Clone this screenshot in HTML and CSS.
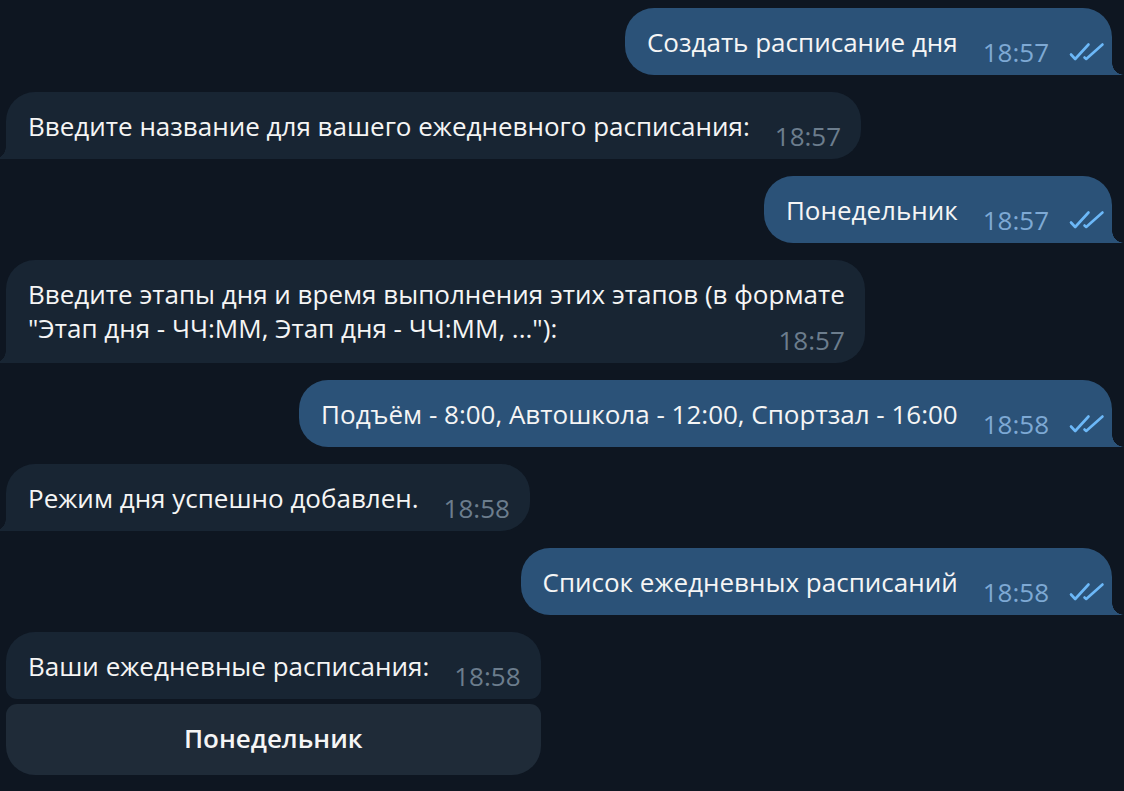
FILE: index.html
```html
<!DOCTYPE html>
<html lang="ru">
<head>
    <meta charset="UTF-8">
    <title>Чат</title>
    <link rel="stylesheet" href="styles.css">
</head>
<body>

<div class="chat">
    <div class="bubble out">
        <span class="text">Создать расписание дня</span>
        <span class="meta">18:57 <svg class="ticks" viewBox="0 0 36 20"><path d="M2 12.5 L6.2 17 L19.5 2.5 M15.5 15.5 L17.2 17 L33.5 2.5"/></svg></span>
    </div>

    <div class="bubble in">
        <span class="text">Введите название для вашего ежедневного расписания:</span>
        <span class="meta">18:57</span>
    </div>

    <div class="bubble out">
        <span class="text">Понедельник</span>
        <span class="meta">18:57 <svg class="ticks" viewBox="0 0 36 20"><path d="M2 12.5 L6.2 17 L19.5 2.5 M15.5 15.5 L17.2 17 L33.5 2.5"/></svg></span>
    </div>

    <div class="bubble in multi">
        <span class="text">Введите этапы дня и время выполнения этих этапов (в формате<br>"Этап дня - ЧЧ:ММ, Этап дня - ЧЧ:ММ, ..."):</span>
        <span class="meta">18:57</span>
    </div>

    <div class="bubble out">
        <span class="text">Подъём - 8:00, Автошкола - 12:00, Спортзал - 16:00</span>
        <span class="meta">18:58 <svg class="ticks" viewBox="0 0 36 20"><path d="M2 12.5 L6.2 17 L19.5 2.5 M15.5 15.5 L17.2 17 L33.5 2.5"/></svg></span>
    </div>

    <div class="bubble in">
        <span class="text">Режим дня успешно добавлен.</span>
        <span class="meta">18:58</span>
    </div>

    <div class="bubble out">
        <span class="text">Список ежедневных расписаний</span>
        <span class="meta">18:58 <svg class="ticks" viewBox="0 0 36 20"><path d="M2 12.5 L6.2 17 L19.5 2.5 M15.5 15.5 L17.2 17 L33.5 2.5"/></svg></span>
    </div>

    <div class="keyboard-group">
        <div class="bubble in with-keyboard">
            <span class="text">Ваши ежедневные расписания:</span>
            <span class="meta">18:58</span>
        </div>
        <button class="kb-button">Понедельник</button>
    </div>
</div>

</body>
</html>
```

FILE: styles.css
```css
body {
    margin: 0;
    background-color: #0e1621;
    font-family: "Open Sans", "Noto Sans", sans-serif;
    color: #f5f5f5;
    overflow: hidden;
}

.chat {
    display: flex;
    flex-direction: column;
    gap: 17px;
    padding-top: 8px;
}

.bubble {
    position: relative;
    display: flex;
    align-items: flex-end;
    padding: 17px 20px 10px 22px;
    border-radius: 29px;
    font-size: 26px;
}

.bubble .text {
    line-height: 34px;
    margin-bottom: 6px;
}

.bubble .meta {
    display: flex;
    align-items: center;
    gap: 20px;
    margin-left: 25px;
    line-height: 26px;
    font-size: 26px;
    white-space: nowrap;
}

.out {
    align-self: flex-end;
    margin-right: 12px;
    background-color: #2b5278;
    border-bottom-right-radius: 0;
    padding-right: 7px;
}

.out .meta {
    color: #7ea9d4;
}

.out::after {
    content: "";
    position: absolute;
    right: -12px;
    bottom: 0;
    width: 12px;
    height: 12px;
    background: radial-gradient(circle at 100% 0, transparent 11.5px, #2b5278 12px);
}

.in {
    align-self: flex-start;
    margin-left: 6px;
    background-color: #182533;
    border-bottom-left-radius: 0;
}

.in .meta {
    color: #6c7d8d;
}

.in::before {
    content: "";
    position: absolute;
    left: -12px;
    bottom: 0;
    width: 12px;
    height: 12px;
    background: radial-gradient(circle at 0 0, transparent 11.5px, #182533 12px);
}

.multi {
    flex-direction: column;
    align-items: stretch;
}

.multi .text {
    margin-bottom: 0;
}

.multi .meta {
    align-self: flex-end;
    margin-top: -18px;
}

.ticks {
    width: 36px;
    height: 20px;
    fill: none;
    stroke: #6cb8f8;
    stroke-width: 2.6;
    stroke-linecap: round;
    stroke-linejoin: round;
}

.keyboard-group {
    align-self: flex-start;
    margin-left: 6px;
    display: flex;
    flex-direction: column;
    gap: 5px;
}

.keyboard-group .with-keyboard {
    margin-left: 0;
    border-radius: 29px 29px 11px 11px;
}

.with-keyboard::before {
    display: none;
}

.kb-button {
    height: 71px;
    border: none;
    border-radius: 11px 11px 29px 29px;
    background-color: #1f2b38;
    color: #f5f5f5;
    font-family: "Open Sans", "Noto Sans", sans-serif;
    font-size: 26px;
    font-weight: 600;
    padding: 0 0 4px;
}
```
